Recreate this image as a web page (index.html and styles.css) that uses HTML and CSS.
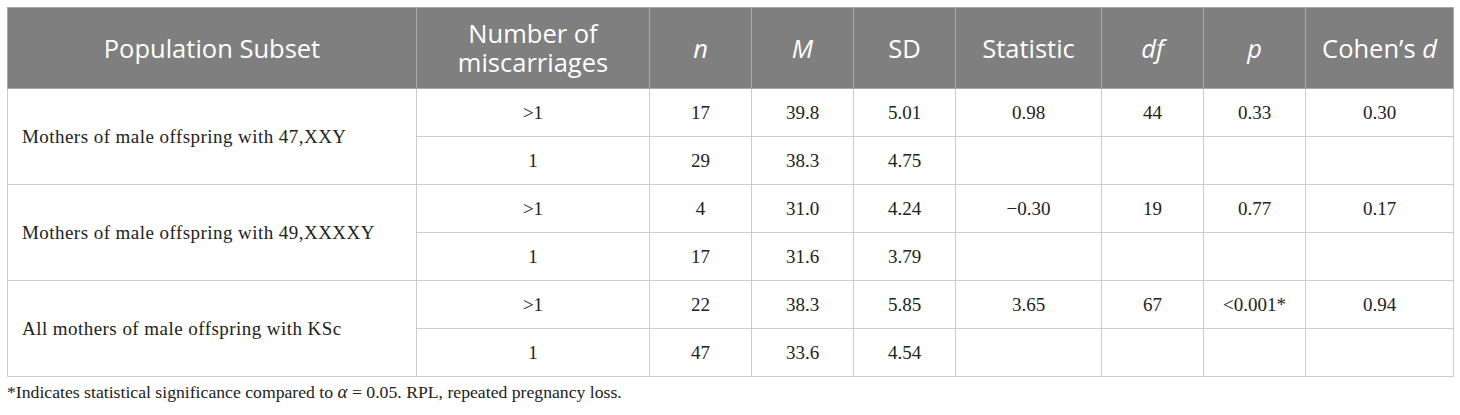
FILE: index.html
```html
<!DOCTYPE html>
<html>
<head>
<meta charset="utf-8">
<link rel="stylesheet" href="styles.css">
</head>
<body>
<table class="stats">
  <colgroup>
    <col class="c-pop"><col class="c-num"><col class="c-sm"><col class="c-sm"><col class="c-sm"><col class="c-stat"><col class="c-sm"><col class="c-sm"><col class="c-d">
  </colgroup>
  <thead>
    <tr>
      <th>Population Subset</th>
      <th><span class="hl">Number of</span><span class="hl">miscarriages</span></th>
      <th><i>n</i></th>
      <th><i>M</i></th>
      <th>SD</th>
      <th>Statistic</th>
      <th><i>df</i></th>
      <th><i>p</i></th>
      <th>Cohen’s <i>d</i></th>
    </tr>
  </thead>
  <tbody>
    <tr>
      <td class="pop" rowspan="2">Mothers of male offspring with 47,XXY</td>
      <td>&gt;1</td><td>17</td><td>39.8</td><td>5.01</td><td>0.98</td><td>44</td><td>0.33</td><td>0.30</td>
    </tr>
    <tr>
      <td>1</td><td>29</td><td>38.3</td><td>4.75</td><td></td><td></td><td></td><td></td>
    </tr>
    <tr>
      <td class="pop" rowspan="2">Mothers of male offspring with 49,XXXXY</td>
      <td>&gt;1</td><td>4</td><td>31.0</td><td>4.24</td><td>−0.30</td><td>19</td><td>0.77</td><td>0.17</td>
    </tr>
    <tr>
      <td>1</td><td>17</td><td>31.6</td><td>3.79</td><td></td><td></td><td></td><td></td>
    </tr>
    <tr>
      <td class="pop" rowspan="2">All mothers of male offspring with KSc</td>
      <td>&gt;1</td><td>22</td><td>38.3</td><td>5.85</td><td>3.65</td><td>67</td><td>&lt;0.001*</td><td>0.94</td>
    </tr>
    <tr>
      <td>1</td><td>47</td><td>33.6</td><td>4.54</td><td></td><td></td><td></td><td></td>
    </tr>
  </tbody>
</table>
<p class="note">*Indicates statistical significance compared to <i class="alpha">α</i> = 0.05. RPL, repeated pregnancy loss.</p>
</body>
</html>
```
FILE: styles.css
```css
html, body {
  margin: 0;
  padding: 0;
  background: #ffffff;
}
body {
  padding: 7px 0 0 7px;
}
.stats {
  border-collapse: collapse;
  table-layout: fixed;
  width: 1446px;
  font-family: "Liberation Serif", "Times New Roman", serif;
  color: #222222;
}
.c-pop { width: 409px; }
.c-num { width: 233px; }
.c-sm { width: 102px; }
.c-stat { width: 146px; }
.c-d { width: 148px; }
.stats th {
  background: #7f7f7f;
  color: #ffffff;
  font-family: "Open Sans", "Noto Sans", sans-serif;
  font-weight: normal;
  font-size: 25.5px;
  line-height: 34px;
  height: 80px;
  padding: 0 2px;
  text-align: center;
  vertical-align: middle;
  border: 1px solid #a9a9a9;
}
.stats th .hl {
  display: block;
  line-height: 29px;
}
.stats td {
  height: 47px;
  padding: 0 4px;
  text-align: center;
  vertical-align: middle;
  font-size: 19px;
  border: 1px solid #cccccc;
}
.stats td.pop {
  text-align: left;
  padding-left: 14px;
  letter-spacing: 0.45px;
}
.note {
  margin: 4px 0 0 0;
  font-family: "Liberation Serif", "Times New Roman", serif;
  font-size: 17.7px;
  color: #222222;
}
.alpha {
  font-size: 19px;
}
```
